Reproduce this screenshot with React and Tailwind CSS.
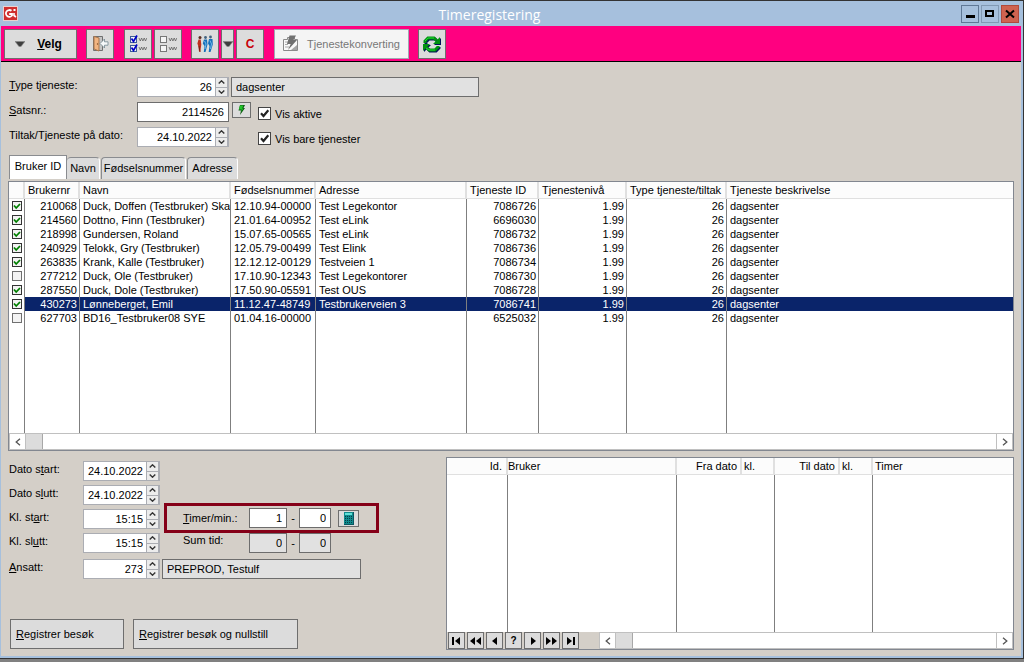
import React from "react";

const users = [
  [true, "210068", "Duck, Doffen (Testbruker) Ska", "12.10.94-00000", "Test Legekontor", "7086726"],
  [true, "214560", "Dottno, Finn (Testbruker)", "21.01.64-00952", "Test eLink", "6696030"],
  [true, "218998", "Gundersen, Roland", "15.07.65-00565", "Test eLink", "7086732"],
  [true, "240929", "Telokk, Gry (Testbruker)", "12.05.79-00499", "Test Elink", "7086736"],
  [true, "263835", "Krank, Kalle (Testbruker)", "12.12.12-00129", "Testveien 1", "7086734"],
  [false, "277212", "Duck, Ole (Testbruker)", "17.10.90-12343", "Test Legekontorer", "7086730"],
  [true, "287550", "Duck, Dole (Testbruker)", "17.50.90-05591", "Test OUS", "7086728"],
  [true, "430273", "Lønneberget, Emil", "11.12.47-48749", "Testbrukerveien 3", "7086741"],
  [false, "627703", "BD16_Testbruker08 SYE", "01.04.16-00000", "", "6525032"],
];
const selectedId = "430273";

function ToolButton({ label, className = "w-7", children }) {
  return (
    <button
      type="button"
      aria-label={label}
      className={`flex h-[30px] shrink-0 items-center justify-center border border-[#6e6e6e] bg-[#dcdcdc] ${className}`}
    >
      {children}
    </button>
  );
}

function DownArrow() {
  return (
    <svg width="10" height="6" viewBox="0 0 10 6" aria-hidden="true">
      <path d="M0 0h10v1L6 6H4L0 1z" fill="#8a8a8a" />
      <path d="M1 1h8L6 5H4z" fill="#3f3f3f" />
    </svg>
  );
}

function LogoIcon() {
  return (
    <svg width="15" height="15" viewBox="0 0 15 15" aria-hidden="true">
      <rect width="15" height="15" fill="#ead0cf" />
      <rect x="1" y="1" width="13" height="13" fill="#cf2e2e" />
      <path d="M8.500 4.800A3.400 3.400 0 1 0 9 9.500V8H6.200" fill="none" stroke="#fff" strokeWidth="1.800" />
      <path d="M11 7v2.500l2 1.500" fill="none" stroke="#fff" strokeWidth="1.600" />
      <rect x="10.500" y="3" width="2" height="2" fill="#fff" />
    </svg>
  );
}

function ExitIcon() {
  return (
    <svg width="17" height="17" viewBox="0 0 17 17" aria-hidden="true">
      <path d="M1.500 15.500v-14h9v14z" fill="#c4c4c4" stroke="#6f6f6f" />
      <path d="M2 1.500 7 3v13l-5-2z" fill="#f2b582" stroke="#a8754a" />
      <circle cx="5.500" cy="9" r="0.700" fill="#7a4a20" />
      <path d="m8 8.500 4.500-4.500v2.800H16v3.400h-3.500V13z" fill="#f7f9fa" stroke="#72868f" strokeWidth="0.800" />
    </svg>
  );
}

function ListIcon({ checked }) {
  const stroke = checked ? "#3c5a98" : "#777";
  return (
    <svg width="18" height="17" viewBox="0 0 18 17" aria-hidden="true">
      {[1, 10].map((y) => (
        <g key={y} fill="none">
          <rect x="1.500" y={y + 0.5} width="6" height="6" fill="#f4f4f4" stroke={stroke} />
          {checked && <path d={`M2.500 ${y + 2.5}l2 3 3.500-6`} stroke="#0000c8" strokeWidth="1.700" />}
          <path d={`M10 ${y + 2}l1.300 3 1.300-3 1.300 3 1.300-3 1.300 3 1.300-3`} stroke="#555" strokeWidth="0.700" />
        </g>
      ))}
    </svg>
  );
}

function PeopleIcon() {
  return (
    <svg width="18" height="18" viewBox="0 0 18 18" aria-hidden="true">
      <circle cx="4" cy="2.500" r="1.500" fill="#5b2d20" />
      <path d="M2.500 4.500h2.200l.6 5-1 7H3l-.6-5-1-3z" fill="#c0301e" />
      <path d="M3 11l1 6" stroke="#7b1b12" />
      <circle cx="9.500" cy="2.500" r="1.400" fill="#42627f" />
      <path d="M8 4.500h3l.5 5-2 7.500H7.800L8.500 11 6.800 8.500z" fill="#1670ba" />
      <path d="m8.500 6 1.500 3-1 5" fill="none" stroke="#79c0ee" strokeWidth="0.900" />
      <circle cx="14.500" cy="2" r="1.400" fill="#42627f" />
      <path d="M13 4h3.500l.3 5.500L14.500 17h-1.800l.8-6-1.500-2.500z" fill="#1670ba" />
      <path d="m14 5.500 1.500 3.500-1 5" fill="none" stroke="#79c0ee" strokeWidth="0.900" />
    </svg>
  );
}

function ConvertIcon() {
  return (
    <svg width="17" height="17" viewBox="0 0 17 17" aria-hidden="true">
      <path d="M1.500 4.500h4v-2h7v2h3v11h-14z" fill="#fafafa" stroke="#8a8a8a" />
      <path d="M3 7h4M3 9.500h3M3 12h4" stroke="#aaa" />
      <path d="m9 15 6-5v5z" fill="#a5a5a5" />
      <path d="M7.500.5h6.500l-2.500 4.500H15l-9 10 2.700-6H5z" fill="#707070" />
    </svg>
  );
}

function RefreshArrows({ color }) {
  return (
    <g fill="none" stroke={color} strokeWidth="3">
      <path d="M2 8V6l3-3h6l2.500 2.500" />
      <path d="M17 2v7h-7z" fill={color} stroke="none" />
      <path d="M15 11v1l-3 3H6l-2.500-2.500" />
      <path d="M0 16V9h7z" fill={color} stroke="none" />
    </g>
  );
}

function RefreshIcon() {
  return (
    <svg width="18" height="18" viewBox="0 0 18 18" aria-hidden="true">
      <g transform="translate(1 1)">
        <RefreshArrows color="#001458" />
      </g>
      <RefreshArrows color="#009210" />
      <path d="M2 6l3-3h6M3 13l3 2h6" fill="none" stroke="#1fdc30" />
    </svg>
  );
}

function Chevron({ up }) {
  return (
    <svg width="7" height="4" viewBox="0 0 7 4" aria-hidden="true">
      <path d={up ? "M.7 3.500 3.500.8l2.800 2.700" : "M.7.5l2.800 2.700L6.300.5"} fill="none" stroke="#333" strokeWidth="1.400" />
    </svg>
  );
}

function Spinner({ id, value, className }) {
  return (
    <div className={`flex h-5 shrink-0 border border-[#abadb3] bg-[#abadb3] ${className}`}>
      <input id={id} defaultValue={value} className="min-w-0 flex-1 bg-white pr-[3px] text-right outline-none" />
      <div className="flex w-[13px] flex-col gap-px px-px">
        <button type="button" aria-label="Opp" className="flex flex-1 items-center justify-center bg-[#ececec]">
          <Chevron up />
        </button>
        <button type="button" aria-label="Ned" className="flex flex-1 items-center justify-center bg-[#ececec]">
          <Chevron />
        </button>
      </div>
    </div>
  );
}

function Field({ className, ...props }) {
  return <input {...props} className={`h-5 min-w-0 shrink-0 border border-[#6d6d6d] px-1 outline-none ${className}`} />;
}

function Check({ label }) {
  return (
    <label className="mt-[5px] flex h-[13px] items-center gap-1">
      <span className="relative size-[13px]">
        <input type="checkbox" defaultChecked className="peer block size-[13px] appearance-none border border-[#444] bg-white" />
        <svg
          width="13"
          height="13"
          viewBox="0 0 13 13"
          aria-hidden="true"
          className="pointer-events-none absolute inset-0 hidden peer-checked:block"
        >
          <path d="m3 6.200 2.500 2.800 4.800-5.800" fill="none" stroke="#222" strokeWidth="2.200" />
        </svg>
      </span>
      {label}
    </label>
  );
}

function RowCheck({ checked, label }) {
  return (
    <span className="relative mx-auto block size-[10px]">
      <input
        type="checkbox"
        aria-label={label}
        defaultChecked={checked}
        className="peer block size-[10px] appearance-none border border-[#707070] bg-[#f3f3f3] checked:border-[#333]"
      />
      <svg
        width="10"
        height="10"
        viewBox="0 0 10 10"
        aria-hidden="true"
        className="pointer-events-none absolute inset-0 hidden peer-checked:block"
      >
        <path d="m2 4.500 2.200 2.500L8 3" fill="none" stroke="#008000" strokeWidth="1.800" />
      </svg>
    </span>
  );
}

function ScrollBar() {
  return (
    <div className="flex h-[17px] min-w-0 flex-1 border border-[#c0c0c0] bg-white">
      <button type="button" aria-label="Rull til venstre" className="flex w-4 items-center justify-center border-r border-[#c0c0c0]">
        <svg width="6" height="8" viewBox="0 0 6 8" aria-hidden="true">
          <path d="M5 .8 1.200 4 5 7.200" fill="none" stroke="#555" strokeWidth="1.300" />
        </svg>
      </button>
      <div className="w-[17px] border-r border-[#a8a8a8] bg-[#dcdcdc]" />
      <div className="flex-1" />
      <button type="button" aria-label="Rull til høyre" className="flex w-4 items-center justify-center border-l border-[#c0c0c0]">
        <svg width="6" height="8" viewBox="0 0 6 8" aria-hidden="true">
          <path d="M1 .8 4.800 4 1 7.200" fill="none" stroke="#555" strokeWidth="1.300" />
        </svg>
      </button>
    </div>
  );
}

const navIcons = [
  ["Første", "M1 1h2v8H1zM9 1v8L4 5z"],
  ["Forrige side", "M5 1v8L0 5zM11 1v8L6 5z"],
  ["Forrige", "M8 1v8L3 5z"],
  ["Søk", null],
  ["Neste", "M4 1v8l5-4z"],
  ["Neste side", "M0 1v8l5-4zM6 1v8l5-4z"],
  ["Siste", "M2 1v8l5-4zM8 1h2v8H8z"],
];

function Th({ className = "", children }) {
  return (
    <th
      scope="col"
      className={`h-[17px] overflow-hidden border-r-2 border-b border-[#e0e0e0] bg-[#fcfcfc] p-0 font-normal whitespace-nowrap last:border-r-0 ${className}`}
    >
      {children}
    </th>
  );
}

function Td({ className = "", children }) {
  return (
    <td className={`overflow-hidden border-r border-[#7f7f7f] p-0 whitespace-nowrap last:border-r-0 ${className}`}>{children}</td>
  );
}

const tabClass =
  "flex h-[22px] items-center justify-center rounded-t-sm border border-b-0 border-[#8a8c90] border-r-white bg-[#dcdcdc] pb-0.5";

export default function App() {
  return (
    <div className="flex min-h-screen flex-col bg-[#808080] pb-[3px] font-['Liberation_Sans',Arial,sans-serif] text-[11px] leading-[14px] text-black">
      <div className="flex flex-1 flex-col border-t border-r border-b border-[#333] bg-[#a6c0dd] pr-0.5 pb-0.5 pl-px">
        <header className="flex h-[25px] items-center gap-0.5 pr-0.5 pl-0.5">
          <LogoIcon />
          <h1 className="flex-1 pt-0.5 text-center font-['Open_Sans','Noto_Sans',sans-serif] text-sm text-white">Timeregistering</h1>
          <button type="button" aria-label="Minimer" className="flex size-[18px] items-center justify-center border border-[#5f7896]">
            <svg width="10" height="10" viewBox="0 0 10 10" aria-hidden="true">
              <path d="M1 6h9v3H1z" />
            </svg>
          </button>
          <button type="button" aria-label="Maksimer" className="flex size-[18px] items-center justify-center border border-[#8199b4]">
            <svg width="10" height="10" viewBox="0 0 10 10" aria-hidden="true">
              <path d="M1 2h7v5H1z" fill="none" stroke="#000" strokeWidth="2" />
            </svg>
          </button>
          <button type="button" aria-label="Lukk" className="flex size-[18px] items-center justify-center border border-[#b04a3c] bg-[#cf6350]">
            <svg width="10" height="10" viewBox="0 0 10 10" aria-hidden="true">
              <path d="m1 1.500 8 7M9 1.500l-8 7" stroke="#000" strokeWidth="2" />
            </svg>
          </button>
        </header>

        <nav className="flex h-9 items-center gap-[9px] border-b border-black bg-[#ff0080] pl-[3px]">
          <ToolButton label="Velg" className="w-[73px] gap-3 pr-1">
            <DownArrow />
            <span className="text-xs font-bold">
              <u>V</u>elg
            </span>
          </ToolButton>
          <ToolButton label="Avslutt">
            <ExitIcon />
          </ToolButton>
          <div className="flex gap-0.5 pl-px">
            <ToolButton label="Merk alle">
              <ListIcon checked />
            </ToolButton>
            <ToolButton label="Fjern merking">
              <ListIcon />
            </ToolButton>
          </div>
          <div className="flex gap-0.5 pr-px">
            <ToolButton label="Brukere">
              <PeopleIcon />
            </ToolButton>
            <ToolButton label="Flere valg" className="w-[13px]">
              <DownArrow />
            </ToolButton>
            <ToolButton label="C">
              <span className="text-xs font-bold text-[#c8000a]">C</span>
            </ToolButton>
          </div>
          <button
            type="button"
            className="flex h-[30px] w-[135px] shrink-0 items-center gap-2 border border-[#a0a8b4] bg-[#f4f4f4] pl-[7px] text-[#777]"
          >
            <ConvertIcon />
            Tjenestekonverting
          </button>
          <ToolButton label="Oppdater">
            <RefreshIcon />
          </ToolButton>
        </nav>

        <main className="flex flex-1 flex-col bg-[#d4cfc8] px-[7px] pt-[15px] pb-1.5">
          <form className="flex flex-col gap-[5px] pl-px">
            <div className="flex h-5 items-start">
              <label htmlFor="type" className="w-32 leading-4">
                <u>T</u>ype tjeneste:
              </label>
              <Spinner id="type" value="26" className="w-[92px]" />
              <Field aria-label="Tjenestenavn" readOnly value="dagsenter" className="ml-0.5 w-[248px] bg-[#e1e1e1]" />
            </div>
            <div className="flex h-5 items-start">
              <label htmlFor="sats" className="w-32 leading-4">
                <u>S</u>atsnr.:
              </label>
              <Field id="sats" defaultValue="2114526" className="w-[92px] bg-white text-right" />
              <button
                type="button"
                aria-label="Hent sats"
                className="mr-[7px] ml-[3px] flex h-4 w-[19px] items-center justify-center border border-[#6e6e6e] bg-[#dcdcdc]"
              >
                <svg width="9" height="10" viewBox="0 0 9 10" aria-hidden="true">
                  <path d="M3 0h5L6.500 3H8L3 10l1-4.500H1.500z" fill="#0a5a10" />
                  <path d="M3 .5h3.500L5 3.500h1.500L4 7l.8-2.500H2z" fill="#22c52a" />
                </svg>
              </button>
              <Check label="Vis aktive" />
            </div>
            <div className="flex h-5 items-start">
              <label htmlFor="dato" className="w-32 leading-4">
                Tiltak/Tjeneste på dato:
              </label>
              <Spinner id="dato" value="24.10.2022" className="mr-[29px] w-[92px]" />
              <Check label="Vis bare tjenester" />
            </div>
          </form>

          <div role="tablist" className="mt-2 flex items-end gap-px pb-0.5 pl-px">
            <button
              type="button"
              role="tab"
              aria-selected="true"
              className="flex h-6 w-[58px] justify-center border border-b-0 border-[#8a8c90] bg-white pt-[3px]"
            >
              Bruker ID
            </button>
            <button type="button" role="tab" aria-selected="false" className={`${tabClass} -ml-px w-[33px] border-l-0`}>
              Navn
            </button>
            <button type="button" role="tab" aria-selected="false" className={`${tabClass} w-[85px]`}>
              Fødselsnummer
            </button>
            <button type="button" role="tab" aria-selected="false" className={`${tabClass} w-[51px]`}>
              Adresse
            </button>
          </div>

          <section className="flex flex-1 flex-col border border-[#828790] bg-white">
            <div className="flex flex-1">
              <table className="w-full table-fixed border-separate border-spacing-0 text-left">
                <colgroup>
                  <col className="w-4" />
                  <col className="w-[55px]" />
                  <col className="w-[151px]" />
                  <col className="w-[85px]" />
                  <col className="w-[151px]" />
                  <col className="w-[72px]" />
                  <col className="w-[88px]" />
                  <col className="w-[100px]" />
                  <col />
                </colgroup>
                <thead>
                  <tr>
                    <Th />
                    <Th className="pl-[3px]">Brukernr</Th>
                    <Th className="pl-[3px]">Navn</Th>
                    <Th className="pl-[3px]">Fødselsnummer</Th>
                    <Th className="pl-[3px]">Adresse</Th>
                    <Th className="pl-[3px]">Tjeneste ID</Th>
                    <Th className="pl-[3px]">Tjenestenivå</Th>
                    <Th className="pl-[3px]">Type tjeneste/tiltak</Th>
                    <Th className="pl-[3px]">Tjeneste beskrivelse</Th>
                  </tr>
                </thead>
                <tbody>
                  {users.map(([checked, id, name, birth, address, service]) => {
                    const tone = id === selectedId ? "bg-[#0a246a] text-white" : "";
                    return (
                      <tr key={id} className="h-[14px]">
                        <Td>
                          <RowCheck checked={checked} label={`Velg ${name}`} />
                        </Td>
                        <Td className={`pr-0.5 text-right ${tone}`}>{id}</Td>
                        <Td className={`pl-[3px] ${tone}`}>{name}</Td>
                        <Td className={`pl-[3px] ${tone}`}>{birth}</Td>
                        <Td className={`pl-[3px] ${tone}`}>{address}</Td>
                        <Td className={`pr-0.5 text-right ${tone}`}>{service}</Td>
                        <Td className={`pr-0.5 text-right ${tone}`}>1.99</Td>
                        <Td className={`pr-0.5 text-right ${tone}`}>26</Td>
                        <Td className={`pl-[3px] ${tone}`}>dagsenter</Td>
                      </tr>
                    );
                  })}
                  <tr>
                    {Array.from({ length: 9 }, (_, i) => (
                      <Td key={i} />
                    ))}
                  </tr>
                </tbody>
              </table>
            </div>
            <div className="flex">
              <ScrollBar />
            </div>
          </section>

          <div className="mt-1.5 grid grid-cols-[438px_1fr]">
            <div className="flex flex-col pt-1 pl-px">
              <form className="flex flex-col gap-1">
                <div className="flex h-5 items-start">
                  <label htmlFor="dstart" className="w-[74px] leading-4">
                    Dato s<u>t</u>art:
                  </label>
                  <Spinner id="dstart" value="24.10.2022" className="w-[77px]" />
                </div>
                <div className="flex h-5 items-start">
                  <label htmlFor="dslutt" className="w-[74px] leading-4">
                    Dato s<u>l</u>utt:
                  </label>
                  <Spinner id="dslutt" value="24.10.2022" className="w-[77px]" />
                </div>
                <div className="flex h-5 items-start">
                  <label htmlFor="kstart" className="w-[74px] leading-4">
                    Kl. st<u>a</u>rt:
                  </label>
                  <Spinner id="kstart" value="15:15" className="w-[77px]" />
                  <div className="-my-1.5 ml-1 flex h-[30px] items-center border-[3px] border-[#850018] pr-[17px] pl-4">
                    <label htmlFor="timer" className="w-[66px] leading-4">
                      <u>T</u>imer/min.:
                    </label>
                    <Field id="timer" defaultValue="1" className="w-[38px] bg-white text-right" />
                    <span className="w-3 text-center">-</span>
                    <Field aria-label="Minutter" defaultValue="0" className="w-8 bg-white text-right" />
                    <button
                      type="button"
                      aria-label="Kalkulator"
                      className="ml-[7px] flex h-[17px] w-[21px] items-center justify-center border border-[#6e6e6e] bg-[#dcdcdc]"
                    >
                      <svg width="10" height="13" viewBox="0 0 10 13" aria-hidden="true">
                        <rect width="10" height="13" fill="#0a5560" />
                        <rect width="9" height="12" fill="#108a8c" />
                        <rect x="1" y="1" width="7" height="2" fill="#5fe0d8" />
                        <path d="M1.500 4v8M3.500 4v8M5.500 4v8M7.500 4v8" stroke="#043c48" strokeDasharray="1 1" />
                      </svg>
                    </button>
                  </div>
                </div>
                <div className="flex h-5 items-start">
                  <label htmlFor="kslutt" className="w-[74px] leading-4">
                    Kl. sl<u>u</u>tt:
                  </label>
                  <Spinner id="kslutt" value="15:15" className="w-[77px]" />
                  <label htmlFor="sum" className="ml-[23px] w-[66px]">
                    Sum tid:
                  </label>
                  <Field id="sum" readOnly value="0" className="w-[38px] bg-[#e1e1e1] text-right" />
                  <span className="w-3 text-center leading-5">-</span>
                  <Field aria-label="Sum minutter" readOnly value="0" className="w-8 bg-[#e1e1e1] text-right" />
                </div>
                <div className="mt-0.5 flex h-5 items-start">
                  <label htmlFor="ansatt" className="w-[74px] leading-4">
                    <u>A</u>nsatt:
                  </label>
                  <Spinner id="ansatt" value="273" className="w-[77px]" />
                  <Field aria-label="Ansattnavn" readOnly value="PREPROD, Testulf" className="ml-0.5 w-[199px] bg-[#e1e1e1]" />
                </div>
              </form>
              <div className="mt-auto flex gap-[9px] pt-8 pb-px pl-px">
                <button type="button" className="h-[30px] w-[114px] border border-[#6e6e6e] bg-[#dcdcdc] pl-[5px] text-left">
                  <u>R</u>egistrer besøk
                </button>
                <button type="button" className="h-[30px] w-[165px] border border-[#6e6e6e] bg-[#dcdcdc] pl-[5px] text-left">
                  <u>R</u>egistrer besøk og nullstill
                </button>
              </div>
            </div>

            <section className="flex min-w-0 flex-col border border-[#828790] bg-white">
              <div className="flex flex-1">
                <table className="w-full table-fixed border-separate border-spacing-0 text-left">
                  <colgroup>
                    <col className="w-[61px]" />
                    <col className="w-[169px]" />
                    <col className="w-[65px]" />
                    <col className="w-[33px]" />
                    <col className="w-[65px]" />
                    <col className="w-[33px]" />
                    <col />
                  </colgroup>
                  <thead>
                    <tr>
                      <Th className="pr-1 text-right">Id.</Th>
                      <Th>Bruker</Th>
                      <Th className="pr-[3px] text-right">Fra dato</Th>
                      <Th className="pl-0.5">kl.</Th>
                      <Th className="pr-[3px] text-right">Til dato</Th>
                      <Th className="pl-0.5">kl.</Th>
                      <Th className="pl-0.5">Timer</Th>
                    </tr>
                  </thead>
                  <tbody>
                    <tr className="h-[157px]">
                      <Td />
                      <Td />
                      <Td className="border-r-0" />
                      <Td />
                      <Td className="border-r-0" />
                      <Td />
                      <Td />
                    </tr>
                  </tbody>
                </table>
              </div>
              <div className="flex bg-[#d4cfc8] pl-px">
                <div className="mr-5 flex gap-0.5">
                  {navIcons.map(([label, path]) => (
                    <button
                      key={label}
                      type="button"
                      aria-label={label}
                      className="flex size-[17px] items-center justify-center border border-[#6e6e6e] bg-[#dcdcdc] text-[10px] font-bold"
                    >
                      {path ? (
                        <svg width="11" height="10" viewBox="0 0 11 10" aria-hidden="true">
                          <path d={path} />
                        </svg>
                      ) : (
                        "?"
                      )}
                    </button>
                  ))}
                </div>
                <ScrollBar />
              </div>
            </section>
          </div>
        </main>
      </div>
    </div>
  );
}
